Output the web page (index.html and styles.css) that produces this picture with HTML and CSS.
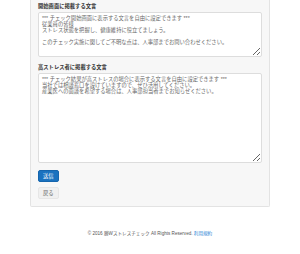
FILE: index.html
```html
<!DOCTYPE html>
<html lang="ja">
<head>
    <meta charset="UTF-8">
    <meta name="viewport" content="width=device-width, initial-scale=1.0">
    <title>メッセージ設定</title>
    <link rel="stylesheet" href="styles.css">
</head>
<body>
    <div class="container">
        <form class="well">
            <div class="form-group">
                <label class="form-label" for="startMessage">開始画面に掲載する文言</label>
                <textarea class="form-control start" id="startMessage">*** チェック開始画面に表示する文言を自由に設定できます ***
従業員の皆様
ストレス状態を把握し、健康維持に役立てましょう。

このチェック実施に関してご不明な点は、人事部までお問い合わせください。</textarea>
            </div>
            <div class="form-group">
                <label class="form-label" for="highMessage">高ストレス者に掲載する文言</label>
                <textarea class="form-control high" id="highMessage">*** チェック結果が高ストレスの場合に表示する文言を自由に設定できます ***
当社では相談窓口を設けていますので、ぜひ活用してください。
産業医への面談を希望する場合は、人事部担当者までお知らせください。</textarea>
            </div>
            <button type="submit" class="btn btn-primary">送信</button>
            <button type="button" class="btn btn-default">戻る</button>
        </form>
    </div>

    <footer class="footer">
        © 2016 勝Wストレスチェック All Rights Reserved. <a href="#">利用規約</a>
    </footer>
</body>
</html>
```

FILE: styles.css
```css
body {
    margin: 0;
    background-color: #fff;
    font-family: "Liberation Sans", "Noto Sans CJK JP", sans-serif;
    font-size: 5.3px;
    color: #333;
}
.container {
    width: 240px;
    margin: 0 auto 0 30px;
}
.well {
    display: flex;
    flex-direction: column;
    align-items: flex-start;
    padding: 3px 7px 7px;
    background-color: #f7f7f7;
    border: 1px solid #e3e3e3;
    border-top: none;
    border-radius: 0 0 2px 2px;
}
.form-group {
    align-self: stretch;
    margin-bottom: 7px;
}
.form-label {
    display: block;
    font-weight: bold;
    line-height: 6px;
    margin-bottom: 3px;
}
.form-control {
    display: block;
    box-sizing: border-box;
    width: 100%;
    padding: 2px 3px;
    font-family: inherit;
    font-size: 5.3px;
    line-height: 6px;
    color: #666;
    background-color: #fff;
    border: 1px solid #ddd;
    border-radius: 2px;
    resize: vertical;
}
.start {
    height: 45px;
}
.high {
    height: 90px;
}
.btn {
    font-family: inherit;
    font-size: 5.3px;
    line-height: 6px;
    padding: 2px 4px;
    border-radius: 2px;
    cursor: pointer;
}
.btn-primary {
    color: #fff;
    background-color: #1a72bf;
    border: 1px solid #1565ad;
}
.btn-default {
    margin-top: 5px;
    color: #666;
    background-color: #f0f0f0;
    border: 1px solid #e6e6e6;
}
.footer {
    margin-top: 23px;
    text-align: center;
    font-size: 4.6px;
    color: #555;
}
.footer a {
    color: #2a7fd4;
    text-decoration: none;
}
```
